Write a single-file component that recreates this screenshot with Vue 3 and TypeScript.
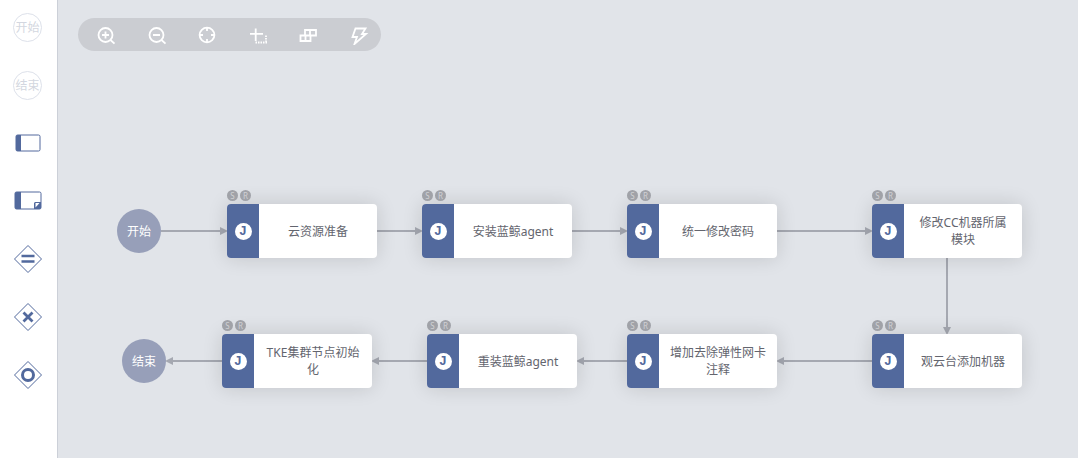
<template>
  <div class="editor">
    <aside class="palette">
      <div class="palette__item"><span class="ghost-circle">开始</span></div>
      <div class="palette__item"><span class="ghost-circle">结束</span></div>
      <div class="palette__item">
        <svg width="26" height="18" viewBox="0 0 26 18">
          <rect x="1" y="1" width="24" height="16" rx="1.5" fill="#fff" stroke="#52699d" />
          <path d="M2.500 1H6v16H2.500A1.500 1.500 0 0 1 1 15.500V2.500A1.500 1.500 0 0 1 2.500 1z" fill="#52699d" />
        </svg>
      </div>
      <div class="palette__item">
        <svg width="28" height="20" viewBox="0 0 28 20">
          <rect x="1" y="1" width="26" height="17" rx="1.5" fill="#fff" stroke="#52699d" />
          <path d="M2.500 1H7v17H2.500A1.500 1.500 0 0 1 1 16.500V2.500A1.500 1.500 0 0 1 2.500 1z" fill="#52699d" />
          <path d="M27 11v5.500a1.500 1.500 0 0 1-1.500 1.500H20v-6l1-1z" fill="#52699d" />
          <path d="M21.500 16.500v-4.500h4z" fill="#fff" />
        </svg>
      </div>
      <div v-for="kind in gateways" :key="kind" class="palette__item">
        <svg width="30" height="30" viewBox="0 0 30 30">
          <path d="M15 1.500 28.500 15 15 28.500 1.500 15z" fill="#fff" stroke="#52699d" stroke-linejoin="round" />
          <path v-if="kind === 'and'" d="M8.500 12h13M8.500 17.500h13" stroke="#52699d" stroke-width="2.600" />
          <path v-if="kind === 'xor'" d="M10.500 10.500l9 9M19.500 10.500l-9 9" stroke="#52699d" stroke-width="2.800" />
          <circle v-if="kind === 'or'" cx="15" cy="15" r="5.500" fill="none" stroke="#52699d" stroke-width="3" />
        </svg>
      </div>
    </aside>

    <main class="canvas">
      <div class="toolbar">
        <svg class="tool" viewBox="0 0 20 20"><circle cx="9.500" cy="10" r="7" /><path d="M14.500 15l4 3.700M9.500 6.500v7M6 10h7" /></svg>
        <svg class="tool" viewBox="0 0 20 20"><circle cx="9.500" cy="10" r="7" /><path d="M14.500 15l4 3.700M6 10h7" /></svg>
        <svg class="tool" viewBox="0 0 20 20"><circle cx="10" cy="10" r="7.400" /><path d="M10 2.600v3.400M10 14v3.400M2.600 10h3.400M14 10h3.400" /></svg>
        <svg class="tool" viewBox="0 0 20 20">
          <path d="M2 8.800h13M7.700 3.500V16" />
          <path class="tool__dash" d="M7.500 17.500h11.500M18 10.500v6" />
        </svg>
        <svg class="tool" viewBox="0 0 20 20"><path d="M2.500 10.500h10v5.500h-10zM7.500 10.500v5.500M7 10.500V5h11v5.500h-6v-5.500" /></svg>
        <svg class="tool" viewBox="0 0 20 20"><path d="M6.500 3.500h10L13 9h4L5.500 19 8 12H3.500z" /></svg>
      </div>

      <svg class="edges" width="1020" height="458" viewBox="58 0 1020 458">
        <path v-for="(edge, i) in edges" :key="i" :d="edge.line" />
        <path v-for="(edge, i) in edges" :key="'tip' + i" class="edges__tip" :d="edge.tip" />
      </svg>

      <div class="endpoint" style="left: 59px; top: 209px">开始</div>
      <div class="endpoint" style="left: 64px; top: 339px">结束</div>

      <div
        v-for="node in nodes"
        :key="node.label"
        class="node"
        :style="{ left: node.x - 58 + 'px', top: node.y + 'px' }"
      >
        <div class="node__flags"><span>S</span><span>R</span></div>
        <div class="node__type"><span class="node__badge">J</span></div>
        <div class="node__label">{{ node.label }}</div>
      </div>
    </main>
  </div>
</template>

<script setup lang="ts">
type FlowNode = { label: string; x: number; y: number };

const gateways = ['and', 'xor', 'or'];

const nodes: FlowNode[] = [
  { label: '云资源准备', x: 227, y: 204 },
  { label: '安装蓝鲸agent', x: 422, y: 204 },
  { label: '统一修改密码', x: 627, y: 204 },
  { label: '修改CC机器所属模块', x: 872, y: 204 },
  { label: 'TKE集群节点初始化', x: 222, y: 334 },
  { label: '重装蓝鲸agent', x: 427, y: 334 },
  { label: '增加去除弹性网卡注释', x: 627, y: 334 },
  { label: '观云台添加机器', x: 872, y: 334 },
];

// straight connector from (x1,y1) to (x2,y2), the tip ends on the target
function edge(x1: number, y1: number, x2: number, y2: number) {
  const dx = Math.sign(x2 - x1);
  const dy = Math.sign(y2 - y1);
  const bx = x2 - dx * 8;
  const by = y2 - dy * 8;
  return {
    line: `M${x1} ${y1}L${bx} ${by}`,
    tip: `M${x2} ${y2}L${bx - dy * 4} ${by - dx * 4}L${bx + dy * 4} ${by + dx * 4}z`,
  };
}

const edges = [
  edge(161, 231, 228, 231),
  edge(377, 231, 423, 231),
  edge(572, 231, 628, 231),
  edge(777, 231, 873, 231),
  edge(947, 258, 947, 335),
  edge(872, 361, 776, 361),
  edge(627, 361, 576, 361),
  edge(427, 361, 371, 361),
  edge(222, 361, 165, 361),
];
</script>

<style scoped>
.editor {
  display: flex;
  width: 1078px;
  height: 458px;
  overflow: hidden;
  font-family: "Noto Sans", "Noto Sans CJK SC", sans-serif;
}

.palette {
  flex: 0 0 55px;
  display: flex;
  flex-direction: column;
  padding: 2px 2px 0 0;
  background: #fff;
  border-right: 1px solid #ccd0d8;
}

.palette__item {
  flex: 0 0 50px;
  margin-bottom: 8px;
  display: flex;
  align-items: center;
  justify-content: center;
}

.ghost-circle {
  width: 27px;
  height: 27px;
  display: flex;
  align-items: center;
  justify-content: center;
  border: 1px solid #dde1ea;
  border-radius: 50%;
  color: #d3d7e0;
  font-size: 12px;
  white-space: nowrap;
}

.canvas {
  position: relative;
  flex: 1;
  background: #e1e4e9;
}

.toolbar {
  position: absolute;
  left: 20px;
  top: 18px;
  width: 303px;
  height: 33px;
  box-sizing: border-box;
  padding: 0 12px 0 18px;
  display: flex;
  align-items: center;
  justify-content: space-between;
  background: #cbcdd2;
  border-radius: 17px;
}

.tool {
  width: 20px;
  height: 20px;
  fill: none;
  stroke: #fff;
  stroke-width: 1.800;
}

.tool__dash {
  stroke-dasharray: 1.500 1;
  stroke-width: 1.800;
}

.edges {
  position: absolute;
  left: 0;
  top: 0;
  fill: none;
  stroke: #a5a8b1;
  stroke-width: 2;
}

.edges__tip {
  fill: #a5a8b1;
  stroke: none;
}

.endpoint {
  position: absolute;
  width: 44px;
  height: 44px;
  display: flex;
  align-items: center;
  justify-content: center;
  background: #979fb9;
  border-radius: 50%;
  color: #fff;
  font-size: 12px;
}

.node {
  position: absolute;
  width: 150px;
  height: 54px;
  display: flex;
  background: #fff;
  border-radius: 4px;
  box-shadow: 0 0 20px rgba(0, 0, 0, 0.14);
}

.node__flags {
  position: absolute;
  left: 0;
  top: -14px;
  display: flex;
  gap: 2px;
}

.node__flags span {
  width: 11px;
  height: 11px;
  display: flex;
  align-items: center;
  justify-content: center;
  background: #a0a2a8;
  border-radius: 50%;
  color: #d0d1d5;
  font-size: 8px;
  line-height: 1;
}

.node__type {
  flex: 0 0 32px;
  display: flex;
  align-items: center;
  justify-content: center;
  background: #52699d;
  border-radius: 4px 0 0 4px;
}

.node__badge {
  width: 17px;
  height: 17px;
  display: flex;
  align-items: center;
  justify-content: center;
  background: #fff;
  border-radius: 50%;
  color: #52699d;
  font-family: "Liberation Mono", monospace;
  font-size: 13px;
  font-weight: 700;
  line-height: 1;
}

.node__label {
  flex: 1;
  min-width: 0;
  padding: 0 10px;
  display: flex;
  align-items: center;
  justify-content: center;
  text-align: center;
  color: #63656e;
  font-size: 12px;
  line-height: 17px;
}
</style>
